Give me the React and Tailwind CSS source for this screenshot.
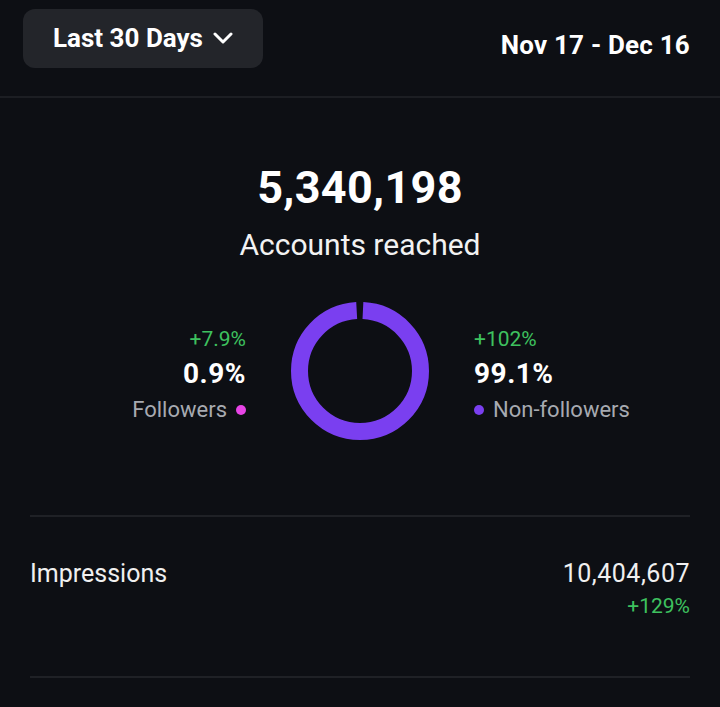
import React from "react";

function Donut() {
  const r = 60.5;
  const c = 2 * Math.PI * r;
  const gap = 7;
  return (
    <svg width="140" height="140" viewBox="0 0 140 140">
      <circle
        cx="70"
        cy="70"
        r={r}
        fill="none"
        stroke="#7a3ff0"
        strokeWidth="17"
        strokeDasharray={`${c - gap} ${gap}`}
        strokeDashoffset={-3}
        transform="rotate(-90 70 70)"
      />
    </svg>
  );
}

export default function App() {
  return (
    <div
      className="w-[720px] h-[707px] bg-[#0d0f14] text-white overflow-hidden"
      style={{ fontFamily: "Roboto, 'Noto Sans', sans-serif" }}
    >
      <div className="flex items-start justify-between h-[96px] pl-[23px] pr-[30px] pt-[9px]">
        <button className="flex items-center gap-[10px] h-[59px] w-[240px] pl-[30px] rounded-[12px] bg-[#23252a]">
          <span className="text-[26px] font-bold">Last 30 Days</span>
          <svg width="20" height="14" viewBox="0 0 20 14" className="mt-[-2px]">
            <path d="M2 3 L10 11 L18 3" fill="none" stroke="white" strokeWidth="3" strokeLinecap="round" strokeLinejoin="round" />
          </svg>
        </button>
        <span className="text-[26px] font-bold tracking-[0.2px] mt-[20px] leading-[32px]">Nov 17 - Dec 16</span>
      </div>
      <div className="h-[2px] bg-[#1c1e23]" />

      <div className="flex flex-col items-center pt-[62px]">
        <div className="text-[45px] font-bold leading-[56px] tracking-[0.3px]">5,340,198</div>
        <div className="text-[30px] leading-[38px] mt-[10px] text-[#f2f2f2]">Accounts reached</div>
      </div>

      <div className="flex items-center justify-center mt-[37px] gap-[44px]">
        <div className="w-[183px] flex flex-col items-end pt-[8px]">
          <div className="text-[21px] text-[#3ec15f] leading-[26px]">+7.9%</div>
          <div className="text-[28px] font-bold leading-[34px] mt-[5px] tracking-[0.5px]">0.9%</div>
          <div className="flex items-center gap-[9px] text-[22px] text-[#a7aab1] leading-[30px] mt-[4px]">
            Followers
            <span className="w-[10px] h-[10px] rounded-full bg-[#e744e6]" />
          </div>
        </div>
        <Donut />
        <div className="w-[183px] flex flex-col items-start pt-[8px]">
          <div className="text-[21px] text-[#3ec15f] leading-[26px]">+102%</div>
          <div className="text-[28px] font-bold leading-[34px] mt-[5px] tracking-[0.5px]">99.1%</div>
          <div className="flex items-center gap-[9px] text-[22px] text-[#a7aab1] leading-[30px] mt-[4px]">
            <span className="w-[10px] h-[10px] rounded-full bg-[#7a3ff0]" />
            Non-followers
          </div>
        </div>
      </div>

      <div className="mx-[30px] mt-[74px] h-[2px] bg-[#1f2126]" />

      <div className="flex justify-between mx-[30px] pt-[41px] h-[159px]">
        <div className="text-[25px] leading-[32px] text-[#f0f0f0]">Impressions</div>
        <div className="flex flex-col items-end">
          <div className="text-[25px] leading-[32px] text-[#f0f0f0] tracking-[0.5px]">10,404,607</div>
          <div className="text-[21px] leading-[26px] text-[#3ec15f] mt-[3px]">+129%</div>
        </div>
      </div>
      <div className="mx-[30px] h-[2px] bg-[#1f2126]" />
    </div>
  );
}
